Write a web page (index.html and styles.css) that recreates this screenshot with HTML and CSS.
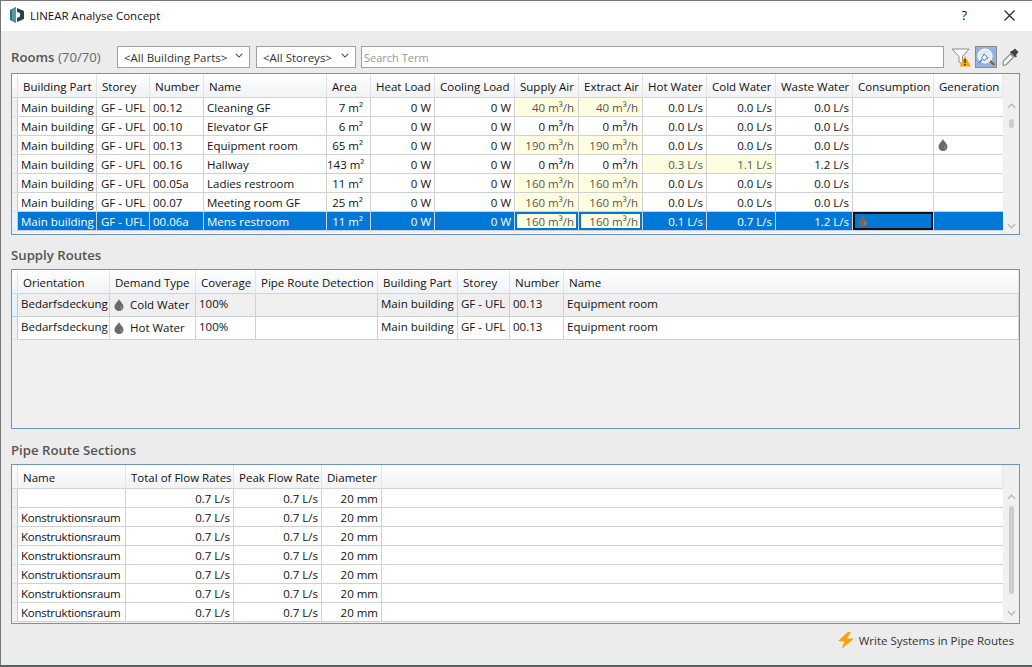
FILE: index.html
```html
<!DOCTYPE html>
<html lang="en">
<head>
    <meta charset="UTF-8">
    <title>LINEAR Analyse Concept</title>
    <link rel="stylesheet" href="styles.css">
</head>
<body>
    <svg class="defs" width="0" height="0">
        <symbol id="drop" viewBox="0 0 10 12">
            <path d="M5 0 C5.6 2 9.5 4.8 9.5 7.8 C9.5 10.2 7.5 12 5 12 C2.5 12 .5 10.2 .5 7.8 C.5 4.8 4.4 2 5 0Z" fill="#6a6a6a"/>
            <path d="M6.8 6.5 C7.8 7.6 7.6 9.4 6.6 10.2 C7 9 7 7.8 6.8 6.5Z" fill="#c9c9c9"/>
        </symbol>
        <symbol id="chevron" viewBox="0 0 10 6">
            <path d="M1 1 L5 5 L9 1" fill="none" stroke="currentColor" stroke-width="1.3"/>
        </symbol>
        <symbol id="chevron-up" viewBox="0 0 10 6">
            <path d="M1 5 L5 1 L9 5" fill="none" stroke="currentColor" stroke-width="1.3"/>
        </symbol>
    </svg>

    <div class="window">
        <div class="titlebar">
            <svg class="logo" width="14" height="16" viewBox="0 0 14 16">
                <path d="M0 3 L6 0 V16 L0 13Z" fill="#2f6f7a"/>
                <path d="M2 3 L6 1 V15 L2 13Z" fill="#5d99a1"/>
                <path d="M7 1 L14 4 V12 L7 15 V11 L10 9.5 V6 L7 5Z" fill="#23444f"/>
            </svg>
            <span class="title">LINEAR Analyse Concept</span>
            <span class="help">?</span>
            <svg class="close" width="11" height="11" viewBox="0 0 11 11">
                <path d="M.5 .5 L10.5 10.5 M10.5 .5 L.5 10.5" stroke="#222" stroke-width="1.1"/>
            </svg>
        </div>

        <div class="content">
            <div class="toolbar">
                <h3 class="heading rooms-heading">Rooms <span class="count">(70/70)</span></h3>
                <div class="combo combo-parts"><span>&lt;All Building Parts&gt;</span><svg class="chev" width="8" height="5"><use href="#chevron"/></svg></div>
                <div class="combo combo-storeys"><span>&lt;All Storeys&gt;</span><svg class="chev" width="8" height="5"><use href="#chevron"/></svg></div>
                <input class="search" type="text" placeholder="Search Term">
                <svg class="tool-filter" width="20" height="20" viewBox="0 0 20 20">
                    <path d="M1 2 H18 L11.5 9.5 V17 L8 15 V9.5Z" fill="#fff" stroke="#8a8a8a"/>
                    <path d="M14 9 L20 19.5 H8.5Z" fill="#f7a600"/>
                    <path d="M14 12 V16 M14 17 V18.5" stroke="#222" stroke-width="1.3"/>
                </svg>
                <div class="tool-search">
                    <svg width="20" height="20" viewBox="0 0 20 20">
                        <circle cx="9" cy="9" r="6.8" fill="#dfe7f3" stroke="#f4f7fb" stroke-width="1.6"/>
                        <path d="M14 14 L18.5 18" stroke="#8a5a2a" stroke-width="2.2"/>
                        <path d="M8 7 L12 11 L9.5 12 L8.5 14 L5.5 10.5 L7 9.5Z" fill="#fff" stroke="#5d7ea8"/>
                        <path d="M6 12.5 L3 16" stroke="#5d7ea8" stroke-width="1.3"/>
                    </svg>
                </div>
                <svg class="tool-picker" width="17" height="19" viewBox="0 0 17 19">
                    <path d="M10 3 L13 0.5 L16.5 4 L14 7 L15 8.5 L13.5 9.5 L8 4.5 L9 3Z" fill="#444"/>
                    <path d="M8.5 6 L11.5 9 L4.5 16.5 L1.5 17.5 L1 16 L1.5 13Z" fill="#fff" stroke="#8a8a8a" stroke-width="1.2"/>
                </svg>
            </div>

            <div class="panel rooms-panel">
                <div class="grid-wrap">
                    <table class="grid grid-rooms">
                        <colgroup>
                            <col><col><col><col><col><col><col><col><col><col><col><col><col><col><col>
                        </colgroup>
                        <thead>
                            <tr><th></th><th>Building Part</th><th>Storey</th><th>Number</th><th>Name</th><th>Area</th><th>Heat Load</th><th>Cooling Load</th><th>Supply Air</th><th>Extract Air</th><th>Hot Water</th><th>Cold Water</th><th>Waste Water</th><th>Consumption</th><th>Generation</th></tr>
                        </thead>
                        <tbody>
                            <tr><td class="rh"></td><td>Main building</td><td>GF - UFL</td><td>00.12</td><td>Cleaning GF</td><td class="num pad-area">7 m²</td><td class="num">0 W</td><td class="num">0 W</td><td class="num air warn">40 m³/h</td><td class="num air warn">40 m³/h</td><td class="num">0.0 L/s</td><td class="num">0.0 L/s</td><td class="num">0.0 L/s</td><td></td><td></td></tr>
                            <tr><td class="rh"></td><td>Main building</td><td>GF - UFL</td><td>00.10</td><td>Elevator GF</td><td class="num pad-area">6 m²</td><td class="num">0 W</td><td class="num">0 W</td><td class="num air">0 m³/h</td><td class="num air">0 m³/h</td><td class="num">0.0 L/s</td><td class="num">0.0 L/s</td><td class="num">0.0 L/s</td><td></td><td></td></tr>
                            <tr><td class="rh"></td><td>Main building</td><td>GF - UFL</td><td>00.13</td><td>Equipment room</td><td class="num pad-area">65 m²</td><td class="num">0 W</td><td class="num">0 W</td><td class="num air warn">190 m³/h</td><td class="num air warn">190 m³/h</td><td class="num">0.0 L/s</td><td class="num">0.0 L/s</td><td class="num">0.0 L/s</td><td></td><td><svg class="drop" width="10" height="12"><use href="#drop"/></svg></td></tr>
                            <tr><td class="rh"></td><td>Main building</td><td>GF - UFL</td><td>00.16</td><td>Hallway</td><td class="num pad-area">143 m²</td><td class="num">0 W</td><td class="num">0 W</td><td class="num air">0 m³/h</td><td class="num air">0 m³/h</td><td class="num warn">0.3 L/s</td><td class="num warn">1.1 L/s</td><td class="num">1.2 L/s</td><td></td><td></td></tr>
                            <tr><td class="rh"></td><td>Main building</td><td>GF - UFL</td><td>00.05a</td><td>Ladies restroom</td><td class="num pad-area">11 m²</td><td class="num">0 W</td><td class="num">0 W</td><td class="num air warn">160 m³/h</td><td class="num air warn">160 m³/h</td><td class="num">0.0 L/s</td><td class="num">0.0 L/s</td><td class="num">0.0 L/s</td><td></td><td></td></tr>
                            <tr><td class="rh"></td><td>Main building</td><td>GF - UFL</td><td>00.07</td><td>Meeting room GF</td><td class="num pad-area">25 m²</td><td class="num">0 W</td><td class="num">0 W</td><td class="num air warn">160 m³/h</td><td class="num air warn">160 m³/h</td><td class="num">0.0 L/s</td><td class="num">0.0 L/s</td><td class="num">0.0 L/s</td><td></td><td></td></tr>
                            <tr class="selected"><td class="rh"></td><td>Main building</td><td>GF - UFL</td><td>00.06a</td><td>Mens restroom</td><td class="num pad-area">11 m²</td><td class="num">0 W</td><td class="num">0 W</td><td class="num air warn">160 m³/h</td><td class="num air warn">160 m³/h</td><td class="num">0.1 L/s</td><td class="num">0.7 L/s</td><td class="num">1.2 L/s</td><td class="current"><svg class="drop" width="10" height="12"><use href="#drop"/></svg></td><td></td></tr>
                        </tbody>
                    </table>
                </div>
                <div class="scrollbar">
                    <svg class="arrow" width="9" height="6"><use href="#chevron-up"/></svg>
                    <div class="track"><div class="thumb thumb-rooms"></div></div>
                    <svg class="arrow" width="9" height="6"><use href="#chevron"/></svg>
                </div>
            </div>

            <h3 class="heading section-heading">Supply Routes</h3>
            <div class="panel routes-panel">
                <div class="grid-wrap">
                    <table class="grid grid-routes">
                        <colgroup>
                            <col><col><col><col><col><col><col><col><col>
                        </colgroup>
                        <thead>
                            <tr><th></th><th>Orientation</th><th>Demand Type</th><th>Coverage</th><th>Pipe Route Detection</th><th>Building Part</th><th>Storey</th><th>Number</th><th>Name</th></tr>
                        </thead>
                        <tbody>
                            <tr class="inactive"><td class="rh rh-active"></td><td>Bedarfsdeckung</td><td class="demand"><svg class="drop demand-drop" width="10" height="12"><use href="#drop"/></svg>Cold Water</td><td>100%</td><td></td><td>Main building</td><td>GF - UFL</td><td>00.13</td><td>Equipment room</td></tr>
                            <tr><td class="rh"></td><td>Bedarfsdeckung</td><td class="demand"><svg class="drop demand-drop" width="10" height="12"><use href="#drop"/></svg>Hot Water</td><td>100%</td><td></td><td>Main building</td><td>GF - UFL</td><td>00.13</td><td>Equipment room</td></tr>
                        </tbody>
                    </table>
                </div>
            </div>

            <h3 class="heading section-heading pipe-heading">Pipe Route Sections</h3>
            <div class="panel pipes-panel">
                <div class="grid-wrap">
                    <table class="grid grid-pipes">
                        <colgroup>
                            <col><col><col><col><col><col>
                        </colgroup>
                        <thead>
                            <tr><th></th><th>Name</th><th>Total of Flow Rates</th><th>Peak Flow Rate</th><th>Diameter</th><th></th></tr>
                        </thead>
                        <tbody>
                            <tr><td class="rh"></td><td></td><td class="num">0.7 L/s</td><td class="num">0.7 L/s</td><td class="num">20 mm</td><td></td></tr>
                            <tr><td class="rh"></td><td class="tight">Konstruktionsraum</td><td class="num">0.7 L/s</td><td class="num">0.7 L/s</td><td class="num">20 mm</td><td></td></tr>
                            <tr><td class="rh"></td><td class="tight">Konstruktionsraum</td><td class="num">0.7 L/s</td><td class="num">0.7 L/s</td><td class="num">20 mm</td><td></td></tr>
                            <tr><td class="rh"></td><td class="tight">Konstruktionsraum</td><td class="num">0.7 L/s</td><td class="num">0.7 L/s</td><td class="num">20 mm</td><td></td></tr>
                            <tr><td class="rh"></td><td class="tight">Konstruktionsraum</td><td class="num">0.7 L/s</td><td class="num">0.7 L/s</td><td class="num">20 mm</td><td></td></tr>
                            <tr><td class="rh"></td><td class="tight">Konstruktionsraum</td><td class="num">0.7 L/s</td><td class="num">0.7 L/s</td><td class="num">20 mm</td><td></td></tr>
                            <tr><td class="rh"></td><td class="tight">Konstruktionsraum</td><td class="num">0.7 L/s</td><td class="num">0.7 L/s</td><td class="num">20 mm</td><td></td></tr>
                        </tbody>
                    </table>
                </div>
                <div class="scrollbar">
                    <svg class="arrow" width="9" height="6"><use href="#chevron-up"/></svg>
                    <div class="track"><div class="thumb thumb-pipes"></div></div>
                    <svg class="arrow" width="9" height="6"><use href="#chevron"/></svg>
                </div>
            </div>

            <div class="footer">
                <svg class="bolt" width="18" height="17" viewBox="0 0 18 17">
                    <path d="M11 0 L1 9 L7.5 9.5 L4.5 17 L17 6.5 L10 6.5 L14 0Z" fill="#f5a30a"/>
                </svg>
                <span>Write Systems in Pipe Routes</span>
            </div>
        </div>
    </div>
</body>
</html>
```

FILE: styles.css
```css
body {
    margin: 0;
    width: 1032px;
    height: 667px;
    overflow: hidden;
    background-color: #56645c;
    font-family: "Open Sans", "Noto Sans", sans-serif;
    font-size: 11.5px;
    color: #111;
}

.defs {
    position: absolute;
}

.window {
    height: 664px;
    border-top: 1px solid #777;
    border-left: 1px solid #777;
    background-color: #ececec;
    display: flex;
    flex-direction: column;
}

/* barra de titulo */
.titlebar {
    height: 30px;
    padding-bottom: 2px;
    box-sizing: border-box;
    background-color: #fff;
    display: flex;
    align-items: center;
    padding-left: 9px;
    flex-shrink: 0;
}

.title {
    margin-left: 6px;
    font-size: 11.5px;
}

.help {
    margin-left: auto;
    font-size: 13px;
}

.close {
    margin-left: 37px;
    margin-right: 17px;
}

.content {
    flex: 1;
    padding: 15px 11px 0 10px;
    display: flex;
    flex-direction: column;
}

.toolbar {
    height: 22px;
    display: flex;
    align-items: center;
    margin-bottom: 5px;
}

.heading {
    margin: 0;
    font-size: 13.2px;
    font-weight: 600;
    color: #555;
    white-space: nowrap;
}

.rooms-heading {
    width: 106px;
}

.count {
    font-weight: 400;
    color: #666;
}

.combo {
    height: 20px;
    background-color: #fff;
    border: 1px solid #a0a0a0;
    display: flex;
    align-items: center;
    justify-content: space-between;
    padding: 0 6px;
    color: #333;
    white-space: nowrap;
}

.combo-parts {
    width: 119px;
    margin-right: 6px;
}

.combo-storeys {
    width: 86px;
    margin-right: 5px;
}

.chev {
    color: #444;
    margin-bottom: 3px;
}

.search {
    width: 577px;
    height: 16px;
    border: 1px solid #a0a0a0;
    padding: 2px;
    font-family: inherit;
    font-size: 11px;
    outline: none;
}

.search::placeholder {
    color: #999;
}

.tool-filter {
    margin-left: 7px;
}

.tool-search {
    width: 22px;
    height: 22px;
    margin-left: 4px;
    background-color: #94b3dd;
    border: 1px solid #8a8a8a;
    box-sizing: border-box;
    display: flex;
    align-items: center;
    justify-content: center;
}

.tool-picker {
    margin-left: 5px;
}

/* paineis com as tabelas */
.panel {
    width: 1009px;
    height: 160px;
    box-sizing: border-box;
    border: 1px solid #6d94c2;
    background-color: #f0f0f0;
    display: flex;
    flex-shrink: 0;
}

.rooms-panel {
    height: 162px;
}

.grid-wrap {
    flex: 1;
    overflow: hidden;
}

.grid {
    width: 100%;
    table-layout: fixed;
    border-collapse: separate;
    border-spacing: 0;
}

/* larguras das colunas */
.grid col:first-child { width: 6px; }

.grid-rooms col:nth-child(2) { width: 79px; }
.grid-rooms col:nth-child(3) { width: 53px; }
.grid-rooms col:nth-child(4) { width: 54px; }
.grid-rooms col:nth-child(5) { width: 123px; }
.grid-rooms col:nth-child(6) { width: 44px; }
.grid-rooms col:nth-child(7) { width: 64px; }
.grid-rooms col:nth-child(8) { width: 80px; }
.grid-rooms col:nth-child(9) { width: 64px; }
.grid-rooms col:nth-child(10) { width: 64px; }
.grid-rooms col:nth-child(11) { width: 64px; }
.grid-rooms col:nth-child(12) { width: 69px; }
.grid-rooms col:nth-child(13) { width: 77px; }
.grid-rooms col:nth-child(14) { width: 81px; }

.grid-routes col:nth-child(2) { width: 92px; }
.grid-routes col:nth-child(3) { width: 86px; }
.grid-routes col:nth-child(4) { width: 60px; }
.grid-routes col:nth-child(5) { width: 122px; }
.grid-routes col:nth-child(6) { width: 80px; }
.grid-routes col:nth-child(7) { width: 52px; }
.grid-routes col:nth-child(8) { width: 54px; }

.grid-pipes col:nth-child(2) { width: 108px; }
.grid-pipes col:nth-child(3) { width: 108px; }
.grid-pipes col:nth-child(4) { width: 88px; }
.grid-pipes col:nth-child(5) { width: 60px; }

.grid th {
    height: 24px;
    padding: 1px 0 0 5px;
    box-sizing: border-box;
    background: linear-gradient(#fff, #f0f2f5);
    border-right: 1px solid #e4e4e4;
    border-bottom: 1px solid #d4d4d4;
    font-weight: 400;
    text-align: left;
    white-space: nowrap;
    overflow: hidden;
}

.grid td {
    height: 19px;
    padding: 0 3px;
    box-sizing: border-box;
    background-color: #fff;
    border-right: 1px solid #d0d0d0;
    border-bottom: 1px solid #d0d0d0;
    white-space: nowrap;
    overflow: hidden;
}

.grid-rooms td:nth-child(3) {
    padding-left: 4px;
}

.grid-rooms td:last-child,
.grid-pipes td:last-child {
    border-right: none;
}

.grid-routes td {
    height: 23px;
    padding-bottom: 3px;
}

.grid-routes td.demand {
    padding-bottom: 1px;
}

.grid td.rh {
    padding: 0;
    background-color: #f0f0f0;
    border-right: 1px solid #c8c8c8;
    border-bottom: 1px solid #e0e0e0;
}

.grid td.rh-active {
    background-color: #e6f3fb;
    border-right: 1px solid #9fd4f2;
    border-bottom: 1px solid #9fd4f2;
}

.grid td.num {
    text-align: right;
}

.grid td.pad-area {
    padding-left: 0;
    padding-right: 7px;
}

.grid td.air {
    padding-right: 4px;
}

.grid td.tight {
    letter-spacing: -0.25px;
}

.grid td.warn {
    background-color: #fffde0;
    color: #555;
    box-shadow: inset 1px 0 #fff;
}

.drop {
    display: block;
    margin-left: 1px;
}

.demand-drop {
    display: inline-block;
    vertical-align: -2px;
    margin: 0 6px 0 1px;
}

.grid .inactive td {
    background-color: #efefef;
}

.grid .inactive td.rh-active {
    background-color: #e6f3fb;
}

.grid .selected td {
    background-color: #0078d7;
    color: #fff;
}

.grid .selected td.rh {
    background-color: #e6f3fb;
}

.grid .selected td.warn {
    background-color: #fffde0;
    color: #555;
    box-shadow: inset 0 0 0 2px #0078d7;
}

.grid .selected td.current {
    box-shadow: inset 0 0 0 2px #111;
    padding-left: 4px;
}

.scrollbar {
    width: 16px;
    flex-shrink: 0;
    display: flex;
    flex-direction: column;
    align-items: center;
    box-sizing: border-box;
    color: #b0b0b0;
}

.rooms-panel .scrollbar {
    padding-top: 29px;
    padding-bottom: 5px;
}

.pipes-panel .scrollbar {
    padding-top: 29px;
    padding-bottom: 7px;
}

.arrow {
    flex-shrink: 0;
}

.track {
    flex: 1;
    width: 5px;
    margin: 5px 0;
}

.thumb {
    background-color: #cdcdcd;
    border-radius: 3px;
}

.thumb-rooms {
    height: 9px;
    margin-top: 5px;
}

.thumb-pipes {
    height: 88px;
    margin-top: 1px;
}

.section-heading {
    height: 34px;
    line-height: 40px;
    flex-shrink: 0;
}

.pipe-heading {
    height: 35px;
    line-height: 42px;
}

.footer {
    height: 32px;
    display: flex;
    justify-content: flex-end;
    align-items: center;
    gap: 4px;
    padding-right: 7px;
    color: #333;
}
```
